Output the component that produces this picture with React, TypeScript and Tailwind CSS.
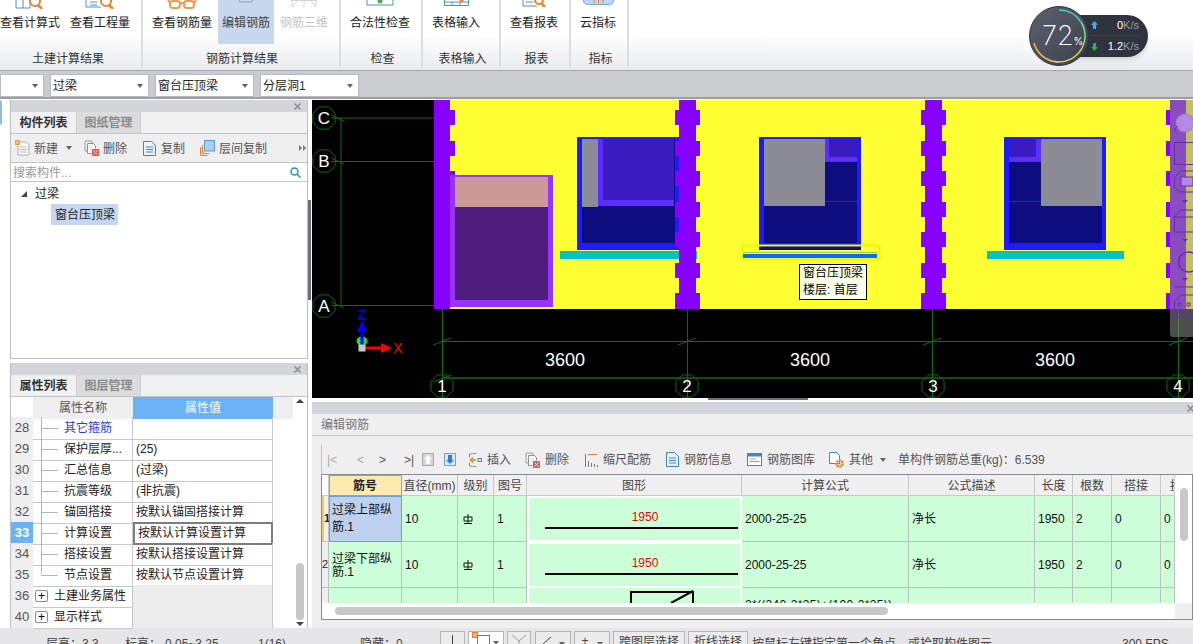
import React from "react";

const FONT = "font-['Liberation_Sans','Noto_Sans_CJK_SC',sans-serif]";

// --- small drawn icons ---

const NewIcon = () => (
  <svg width="15" height="16" viewBox="0 0 15 16" fill="none">
    <path d="M3 2h8l3 3v10H3z" fill="#fff" stroke="#a8a8a8" />
    <path d="M5 7h7M5 9.5h7M5 12h7" stroke="#b5b5b5" />
    <rect x="0" y="0" width="5" height="5" fill="#f59a3c" />
    <rect x="1.5" y="1.5" width="2" height="2" fill="#ffe3a8" />
  </svg>
);
const DeleteIcon = () => (
  <svg width="15" height="16" viewBox="0 0 15 16" fill="none">
    <path d="M1 1h7v2M1 1v10h2" stroke="#a0a0a0" />
    <path d="M3.5 3.5h6l2 2v3M3.5 3.5v10h4" stroke="#8f8f8f" fill="#fff" />
    <rect x="8" y="9" width="7" height="7" fill="#e05a5a" />
    <path d="M9.5 10.5l4 4M13.5 10.5l-4 4" stroke="#fff" />
  </svg>
);
const CopyIcon = () => (
  <svg width="13" height="15" viewBox="0 0 13 15" fill="none">
    <path d="M.5.5h8l4 4v10H.5z" fill="#eaf2fb" stroke="#3f86cf" />
    <path d="M3 6h7M3 8.5h7M3 11h7" stroke="#3f86cf" />
  </svg>
);
const LayerCopyIcon = () => (
  <svg width="15" height="16" viewBox="0 0 15 16" fill="none">
    <path d="M.5 7v8.5h7" stroke="#e9822c" />
    <path d="M2.5 5v8.5h7" stroke="#e9822c" />
    <rect x="4.5" y=".5" width="10" height="10.5" fill="#a9cdf3" stroke="#5b9bdc" />
  </svg>
);
const SmallClose = () => (
  <svg width="7" height="7" viewBox="0 0 7 7" stroke="#8a8a90" strokeWidth="1.5">
    <path d="M.5.5l6 6M6.5.5l-6 6" />
  </svg>
);
const Caret = ({ className = "" }: { className?: string }) => (
  <svg width="6" height="4" viewBox="0 0 6 4" className={className}>
    <path d="M0 0h6L3 4z" fill="#666" />
  </svg>
);
const SteelMark = () => (
  <svg width="10" height="10" viewBox="0 0 10 10" fill="none" stroke="#111">
    <path d="M1 3h8v4H1zM5 0v9M1 9.5h8" />
  </svg>
);

// tops of the ribbon icons are cut off by the window edge
const CalcIcon = () => (
  <svg width="30" height="9" viewBox="0 0 30 9" fill="none">
    <path d="M1 0v8h14V0M8 0v8" stroke="#4a8fd6" />
    <circle cx="20" cy="1" r="5" stroke="#f0822a" strokeWidth="2" />
    <path d="M23 5l4 4" stroke="#f0822a" strokeWidth="2.5" />
  </svg>
);
const QtyIcon = () => (
  <svg width="30" height="9" viewBox="0 0 30 9" fill="none">
    <path d="M1 0v7h15M5 2h7M5 5h7" stroke="#4a8fd6" />
    <circle cx="21" cy="1" r="5" stroke="#f0822a" strokeWidth="2" />
    <path d="M24 5l4 4" stroke="#f0822a" strokeWidth="2.5" />
  </svg>
);
const GlassesIcon = () => (
  <svg width="30" height="9" viewBox="0 0 30 9" fill="none" stroke="#f09a50" strokeWidth="2">
    <rect x="3" y="1" width="10" height="7" rx="3" />
    <rect x="17" y="1" width="10" height="7" rx="3" />
    <path d="M13 3h4M3 3L1 0M27 3l2-3" />
  </svg>
);
const PanelIcon = () => (
  <svg width="14" height="3" viewBox="0 0 14 3" fill="none">
    <path d="M0 0q0 2 2 2h10q2 0 2-2" stroke="#9a9ea6" />
  </svg>
);
const Rebar3dIcon = () => (
  <svg width="28" height="8" viewBox="0 0 28 8" fill="none" stroke="#d4d4d4">
    <path d="M1 .5h26M2 0v7M14 0v7M26 0v7M2 7L8 0M20 0l6 7" />
  </svg>
);
const CheckIcon = () => (
  <svg width="28" height="6" viewBox="0 0 28 6" fill="none">
    <path d="M1 0v5h26V0" stroke="#4a8fd6" />
    <circle cx="14" cy="1" r="2.5" fill="#58a55c" />
  </svg>
);
const TableInIcon = () => (
  <svg width="25" height="6" viewBox="0 0 25 6" fill="none">
    <path d="M.5 0v5.5h24V0M.5 2h24M8 2v3M16 2v3" stroke="#4a8fd6" />
    <path d="M15 0h5l-2 3z" fill="#f0822a" />
  </svg>
);
const ReportIcon = () => (
  <svg width="25" height="7" viewBox="0 0 25 7" fill="none">
    <path d="M1 0v6h14M4 2h7" stroke="#4a8fd6" />
    <circle cx="17" cy="0" r="4" stroke="#f0822a" strokeWidth="2" />
    <path d="M19 3l4 4" stroke="#f0822a" strokeWidth="2.5" />
  </svg>
);
const CloudIcon = () => (
  <svg width="31" height="5" viewBox="0 0 31 5" fill="none">
    <path d="M.5 0q0 4.5 5 4.5h20q5 0 5-4.5" fill="#bcd6f5" stroke="#6ea6e6" />
    <path d="M11 0v3M15.5 0v3M20 0v3" stroke="#f0822a" />
  </svg>
);

// --- ribbon ---

const ribbonGroups = [
  {
    label: "土建计算结果",
    width: "w-[143px]",
    row: "gap-[10px]",
    labelCls: "pr-[5px]",
    items: [
      { text: "查看计算式", icon: <CalcIcon /> },
      { text: "查看工程量", icon: <QtyIcon /> },
    ],
  },
  {
    label: "钢筋计算结果",
    width: "w-[198px]",
    row: "pl-[9px] gap-[6px]",
    labelCls: "pl-[2px]",
    items: [
      { text: "查看钢筋量", icon: <GlassesIcon /> },
      { text: "编辑钢筋", icon: <PanelIcon />, active: true },
      { text: "钢筋三维", icon: <Rebar3dIcon />, disabled: true },
    ],
  },
  { label: "检查", width: "w-[82px]", row: "pl-[9px]", labelCls: "pl-[3px]", items: [{ text: "合法性检查", icon: <CheckIcon /> }] },
  { label: "表格输入", width: "w-[78px]", row: "pl-[9px]", labelCls: "pl-[3px]", items: [{ text: "表格输入", icon: <TableInIcon /> }] },
  { label: "报表", width: "w-[70px]", row: "pl-[9px]", labelCls: "pl-[3px]", items: [{ text: "查看报表", icon: <ReportIcon /> }] },
  { label: "指标", width: "w-[58px]", row: "pl-[9px]", labelCls: "pl-[3px]", items: [{ text: "云指标", icon: <CloudIcon /> }] },
];

const Ribbon = () => (
  <div className="flex h-[71px] shrink-0 border-b border-[#a6a9ad] bg-gradient-to-b from-white via-white to-[#e9ebed]">
    {ribbonGroups.map((g) => (
      <div key={g.label} className={`flex h-[67px] shrink-0 flex-col border-r-2 border-[#dcdedf] ${g.width}`}>
        <div className={`flex h-[45px] ${g.row}`}>
          {g.items.map((it: any) => (
            <div
              key={it.text}
              className={`flex flex-col items-center ${it.active ? "w-[56px] bg-[#c8d8ef] text-[#444]" : ""} ${
                it.disabled ? "text-[#c4c4c4]" : "text-[#222]"
              }`}
            >
              <div className="flex h-[15px] items-start justify-center">{it.icon}</div>
              <span className="whitespace-nowrap text-[12px] leading-[17px]">{it.text}</span>
            </div>
          ))}
        </div>
        <div className={`pt-[7px] text-center text-[12px] leading-[16px] text-[#333] ${g.labelCls}`}>{g.label}</div>
      </div>
    ))}
  </div>
);

const Select = ({ value, className }: { value: string; className: string }) => (
  <div className={`flex h-[23px] items-center justify-between border border-[#b9bbbf] bg-white pl-[2px] pr-[5px] text-[12px] text-[#222] ${className}`}>
    <span>{value}</span>
    <Caret />
  </div>
);

const SelectorBar = () => (
  <div className="flex h-[28px] shrink-0 items-start gap-[6px] border-b-2 border-[#9c9ea2] bg-[#c9cbcf] pt-[3px]">
    <Select value="" className="w-[44px]" />
    <Select value="过梁" className="w-[99px]" />
    <Select value="窗台压顶梁" className="w-[99px]" />
    <Select value="分层洞1" className="w-[99px]" />
  </div>
);

// --- floating network meter ---

const SpeedArrow = ({ up }: { up?: boolean }) => (
  <svg width="7" height="8" viewBox="0 0 7 8">
    <path d={up ? "M3.5 0L7 4H5v4H2V4H0z" : "M3.5 8L7 4H5V0H2v4H0z"} fill={up ? "#3fa9f5" : "#2cb34a"} />
  </svg>
);

const NetMeter = () => (
  <div className="absolute left-[1029px] top-[6px] h-[60px] w-[120px]">
    <div className="absolute left-[40px] top-[9px] flex h-[42px] w-[79px] flex-col rounded-r-[21px] bg-[#2f333e] pl-[22px] pr-[9px] text-[11px] shadow-md">
      <div className="flex h-[21px] items-center justify-between border-b border-[#3c404b]">
        <SpeedArrow up />
        <span className="text-white">
          0<span className="text-[#9a9ea8]">K/s</span>
        </span>
      </div>
      <div className="flex h-[21px] items-center justify-between">
        <SpeedArrow />
        <span className="text-white">
          1.2<span className="text-[#9a9ea8]">K/s</span>
        </span>
      </div>
    </div>
    <svg width="60" height="60" viewBox="0 0 60 60" className="absolute left-0 top-0" fill="none">
      <defs>
        <linearGradient id="dial" x1="0" y1="0" x2="1" y2="1">
          <stop offset="0" stopColor="#5d6170" />
          <stop offset="1" stopColor="#3c3f4a" />
        </linearGradient>
      </defs>
      <circle cx="30" cy="30" r="29.5" fill="url(#dial)" stroke="#33363f" />
      <path d="M30 4A26 26 0 0 1 52 16" stroke="#3fd6c0" strokeWidth="1.5" />
      <path d="M52 16A26 26 0 0 1 53 42" stroke="#7edc9a" strokeWidth="1.5" />
      <path d="M53 42A26 26 0 0 1 25 55.5" stroke="#d6e060" strokeWidth="1.5" />
      <path d="M25 55.5A26 26 0 0 1 5 37" stroke="#f0b84a" strokeWidth="1.5" />
    </svg>
    <div className="absolute left-[13px] top-[14px] flex items-baseline font-['Inter',sans-serif] text-white">
      <span className="text-[27px] font-extralight leading-[32px]">72</span>
      <span className="text-[10px]">%</span>
    </div>
  </div>
);

// --- CAD canvas ---

const toothYs = [110, 141, 171, 202, 232, 263, 293];

const Column = ({ x }: { x: number }) => (
  <g fill="#8800ff">
    <rect x={x - 8} y={100} width={17} height={209} />
    {toothYs.map((y) => (
      <rect key={y} x={x - 12} y={y} width={25} height={y === 293 ? 16 : 15} />
    ))}
  </g>
);

const Octagon = ({ cx, cy, r, label }: { cx: number; cy: number; r: number; label: string }) => {
  const pts = Array.from({ length: 8 }, (_, i) => {
    const a = (Math.PI / 4) * i + Math.PI / 8;
    return `${cx + r * Math.cos(a)},${cy + r * Math.sin(a)}`;
  }).join(" ");
  return (
    <g>
      <polygon points={pts} fill="none" stroke="#0a6e0a" />
      <text x={cx} y={cy + 6} textAnchor="middle" fontSize="17" fill="#fff" fontFamily="Liberation Sans">
        {label}
      </text>
    </g>
  );
};

const Win = ({ x, children }: { x: number; children?: React.ReactNode }) => (
  <g>
    <rect x={x} y={137} width={102} height={113} fill="#1c1cff" />
    <rect x={x + 5} y={139} width={93} height={104} fill="#0d0d80" />
    {children}
  </g>
);

const Canvas = () => (
  <div className="relative h-[298px] shrink-0 bg-black">
    <svg width="881" height="298" viewBox="312 100 881 298" className="block">
      <rect x="446" y="100" width="747" height="209" fill="#ffff33" />

      {/* door opening */}
      <rect x="450" y="175" width="103" height="132" fill="#9933ff" />
      <rect x="455" y="177" width="93" height="30" fill="#cc9999" />
      <rect x="455" y="207" width="93" height="93" fill="#4f1d7c" />

      {/* windows */}
      <Win x={577}>
        <rect x="597" y="139" width="77" height="67" fill="#5b2eff" />
        <rect x="603" y="139" width="71" height="61" fill="#3a1bbf" />
        <rect x="582" y="139" width="16" height="68" fill="#8c8c96" />
      </Win>
      <rect x="560" y="251" width="137" height="8" fill="#00c4c4" />
      <Win x={759}>
        <rect x="825" y="139" width="32" height="23" fill="#5b2eff" />
        <rect x="829" y="139" width="28" height="18" fill="#3a1bbf" />
        <path d="M825 201.5h32" stroke="#4a1a90" />
        <rect x="764" y="139" width="61" height="67" fill="#8c8c96" />
      </Win>
      <rect x="742.5" y="245.5" width="137" height="14" fill="#ffff33" stroke="#e0ff00" strokeWidth="2" />
      <rect x="759" y="246.5" width="102" height="3.5" fill="#0d0d80" />
      <path d="M743 252.5h134" stroke="#a8d040" />
      <rect x="743" y="254" width="134" height="4" fill="#0a6cff" />
      <Win x={1004}>
        <rect x="1009" y="139" width="32" height="23" fill="#5b2eff" />
        <rect x="1009" y="139" width="27" height="18" fill="#3a1bbf" />
        <path d="M1009 201.5h32" stroke="#4a1a90" />
        <rect x="1041" y="139" width="61" height="67" fill="#8c8c96" />
      </Win>
      <rect x="987" y="251" width="137" height="8" fill="#00c4c4" />

      {/* columns */}
      <rect x="434" y="100" width="16" height="209" fill="#8800ff" />
      {toothYs.slice(0, 3).map((y) => (
        <rect key={y} x="450" y={y} width="5" height={y === 171 ? 4 : 15} fill="#8800ff" />
      ))}
      <Column x={687} />
      <Column x={933} />
      <g fill="#8800ff">
        <rect x="1170" y="100" width="16" height="209" />
        {toothYs.map((y) => (
          <rect key={y} x="1166" y={y} width="4" height={y === 293 ? 16 : 15} />
        ))}
      </g>

      {/* axis grid */}
      <g stroke="#0a6e0a" fill="none">
        <path d="M341 118v188M331 118h103M331 161.5h103M331 305.5h103" />
        <path d="M331 115l13 6M331 158l13 6M331 302l13 6" />
        <path d="M442.5 309v89M687.5 309v89M932.5 309v89M1178.5 309v89" />
        <path d="M442 341.5h751" />
        <path d="M442 378h751" strokeWidth="1.5" />
        <path d="M433 345l18-7M678 345l18-7M923 345l18-7M1169 345l18-7M433 382l18-7" />
      </g>
      <Octagon cx={324} cy={118} r={12} label="C" />
      <Octagon cx={324} cy={161} r={12} label="B" />
      <Octagon cx={324} cy={306} r={12} label="A" />
      <Octagon cx={442} cy={386} r={12} label="1" />
      <Octagon cx={687} cy={386} r={12} label="2" />
      <Octagon cx={933} cy={386} r={12} label="3" />
      <Octagon cx={1178} cy={386} r={12} label="4" />
      {[565, 810, 1055].map((x) => (
        <text key={x} x={x} y={366} textAnchor="middle" fontSize="18" fill="#fff" fontFamily="Liberation Sans">
          3600
        </text>
      ))}

      {/* axis gizmo */}
      <ellipse cx="362" cy="341" rx="5.5" ry="4.5" fill="#22dd22" />
      <path d="M362 345v-20" stroke="#0000ff" strokeWidth="3" />
      <path d="M362 320l-5 12h10z" fill="#0000ff" />
      <path d="M365 348h20" stroke="#ff0000" strokeWidth="3" />
      <path d="M392 348l-11-5v10z" fill="#ff0000" />
      <rect x="358.5" y="344.5" width="7" height="7" fill="#c8c8c8" />
      <text x="362" y="319" textAnchor="middle" fontSize="13" fill="#0000ff" fontFamily="Liberation Sans">Z</text>
      <text x="398" y="353" textAnchor="middle" fontSize="14" fill="#ff0000" fontFamily="Liberation Sans">X</text>

      {/* floating view toolbar */}
      <path d="M1170 100h23v237h-20q-3 0-3-3z" fill="#8c8c8c" fillOpacity="0.55" />
      <g fill="none" stroke="#6a2da8">
        <circle cx="1185" cy="123" r="9" fill="#b48ae6" stroke="#a07cc8" />
        <path d="M1176 131q-3-2 2-5" />
        <path d="M1174.5 142.5h19v22h-19z" />
        <path d="M1174.5 178l6-7h13M1174.5 178v10l5 4h14" />
        <rect x="1181" y="177" width="12" height="9" fill="#b48ae6" />
        <path d="M1174.5 217l6-7h13M1174.5 217h19M1174.5 217v15h19" />
        <path d="M1193 253a10 10 0 1 0 0 18" strokeWidth="1.5" />
        <path d="M1175 287h18M1174.5 302l6-7h13M1174.5 302v15h19" />
        <path d="M1178 303h3v3h-3zM1178 310h3v3h-3zM1187 303h3v3h-3zM1187 310h3v3h-3z" />
      </g>
      <g fill="#6a2da8">
        <path d="M1182 200h6l-3 3zM1182 239h6l-3 3zM1182 278h6l-3 3z" />
      </g>
    </svg>
    {/* hover tooltip */}
    <div className="absolute left-[487px] top-[164px] w-[68px] border border-black bg-[#ffffe8] pl-[3px] text-[12px] leading-[17px] text-black">
      <div>窗台压顶梁</div>
      <div>楼层: 首层</div>
    </div>
  </div>
);

// --- left panels ---

const PanelHead = ({ flush }: { flush?: boolean }) => (
  <div className={`flex h-[12px] shrink-0 items-center justify-end bg-[#d4d5da] ${flush ? "-mr-[1px]" : "pr-[6px]"}`}>
    <SmallClose />
  </div>
);

const Tabs = ({ active, other }: { active: string; other: string }) => (
  <div className="flex h-[22px] shrink-0 border-b border-[#c4c4c8] bg-[#f1f1f1] text-[12px] leading-[23px]">
    <div className="w-[65px] text-center font-bold text-[#333]">{active}</div>
    <div className="w-[65px] border-x border-[#cfcfcf] bg-[#dcdcdc] text-center font-bold text-[#8b8b8b]">{other}</div>
  </div>
);

const ComponentPanel = () => (
  <div className="flex h-[259px] shrink-0 flex-col border-x border-b border-[#bfc0c4] bg-white">
    <PanelHead />
    <Tabs active="构件列表" other="图纸管理" />
    <div className="flex h-[29px] shrink-0 items-center border-b border-[#c4c4c8] bg-[#efefef] pl-[4px] pr-[1px] text-[12px] leading-[18px] text-[#555]">
      <NewIcon />
      <span className="ml-[4px] pt-[1px]">新建</span>
      <Caret className="ml-[8px]" />
      <span className="ml-[12px]"><DeleteIcon /></span>
      <span className="ml-[4px] pt-[1px]">删除</span>
      <span className="ml-[16px]"><CopyIcon /></span>
      <span className="ml-[5px] pt-[1px]">复制</span>
      <span className="ml-[15px]"><LayerCopyIcon /></span>
      <span className="ml-[4px] pt-[1px]">层间复制</span>
      <svg width="7" height="6" viewBox="0 0 7 6" className="ml-auto">
        <path d="M0 0l3 3-3 3zM4 0l3 3-3 3z" fill="#777" />
      </svg>
    </div>
    <div className="flex h-[19px] shrink-0 items-center justify-between border-b border-[#c4c4c8] pl-[2px] pr-[6px] text-[12px] leading-[20px] text-[#9a9a9a]">
      <span className="pt-[1px]">搜索构件...</span>
      <svg width="11" height="11" viewBox="0 0 11 11" fill="none" stroke="#2f8fc8" strokeWidth="1.5">
        <circle cx="4.5" cy="4.5" r="3.5" />
        <path d="M7 7l3.5 3.5" />
      </svg>
    </div>
    <div className="pl-[10px] pt-[1px] text-[12px] text-[#222]">
      <div className="flex h-[21px] items-center">
        <svg width="6" height="6" viewBox="0 0 6 6"><path d="M6 0v6H0z" fill="#444" /></svg>
        <span className="ml-[8px]">过梁</span>
      </div>
      <div className="ml-[30px] h-[21px] w-[67px] bg-[#c5d7f0] pl-[4px] leading-[23px]">窗台压顶梁</div>
    </div>
  </div>
);

const propRows = [
  { no: 28, name: "其它箍筋", value: "", blue: true },
  { no: 29, name: "保护层厚...", value: "(25)" },
  { no: 30, name: "汇总信息", value: "(过梁)" },
  { no: 31, name: "抗震等级", value: "(非抗震)" },
  { no: 32, name: "锚固搭接", value: "按默认锚固搭接计算" },
  { no: 33, name: "计算设置", value: "按默认计算设置计算", selected: true },
  { no: 34, name: "搭接设置", value: "按默认搭接设置计算" },
  { no: 35, name: "节点设置", value: "按默认节点设置计算", last: true },
  { no: 36, name: "土建业务属性", group: true },
  { no: 40, name: "显示样式", group: true },
];

const PropRow = ({ row }: { row: (typeof propRows)[number] }) => (
  <div className="grid h-[21px] grid-cols-[22px_100px_140px] text-[12px] leading-[22px]">
    <div
      className={`border-b border-[#c9c9cd] text-center text-[13px] ${
        row.selected ? "bg-[#6cb2f7] font-bold text-white" : "bg-[#efefef] text-[#555]"
      }`}
    >
      {row.no}
    </div>
    <div className="relative flex items-center border-b border-r border-[#c9c9cd]">
      {row.group ? (
        <>
          <span className="ml-[2px] flex h-[12px] w-[13px] items-center justify-center rounded-[2px] border border-[#8a8a8a] text-[12px] leading-none">+</span>
          <span className="ml-[6px] whitespace-nowrap text-[#222]">{row.name}</span>
        </>
      ) : (
        <>
          <span className={`absolute left-[8px] top-0 w-px bg-[#b5b5b5] ${row.last ? "h-[10px]" : "h-[21px]"}`} />
          <span className="ml-[8px] h-px w-[17px] bg-[#b5b5b5]" />
          <span className={`ml-[6px] whitespace-nowrap ${row.blue ? "text-[#2a3fe0]" : "text-[#222]"}`}>{row.name}</span>
        </>
      )}
    </div>
    <div
      className={`whitespace-nowrap pl-[3px] text-[#222] ${
        row.group ? "border-b border-r border-[#c9c9cd] bg-[#ededed]" : ""
      } ${row.selected ? "border-2 border-[#7d7d7d] leading-[18px]" : "border-b border-r border-[#c9c9cd]"}`}
    >
      {row.value}
    </div>
  </div>
);

const PropertyPanel = () => (
  <div className="flex min-h-0 flex-1 flex-col border-x border-[#bfc0c4] bg-white">
    <PanelHead />
    <Tabs active="属性列表" other="图层管理" />
    <div className="flex min-h-0 flex-1">
      <div className="w-[282px]">
        <div className="grid h-[20px] grid-cols-[22px_100px_140px_20px] text-center text-[12px] leading-[22px]">
          <div />
          <div className="bg-[#efefef] text-[#555]">属性名称</div>
          <div className="bg-[#6cb2f7] text-white">属性值</div>
          <div className="bg-[#efefef]" />
        </div>
        {propRows.map((r) => (
          <PropRow key={r.no} row={r} />
        ))}
      </div>
      <div className="ml-[3px] flex w-[8px] flex-col items-center pt-[2px]">
        <svg width="8" height="4" viewBox="0 0 8 4"><path d="M4 0l4 4H0z" fill="#444" /></svg>
        <div className="mt-[160px] h-[57px] w-[8px] rounded-[4px] bg-[#c8c8c8]" />
        <svg width="8" height="4" viewBox="0 0 8 4" className="mt-[2px]"><path d="M0 0h8L4 4z" fill="#444" /></svg>
      </div>
    </div>
  </div>
);

// --- rebar table ---

const rebarCols = ["", "筋号", "直径(mm)", "级别", "图号", "图形", "计算公式", "公式描述", "长度", "根数", "搭接", "损"];

const GRID = "grid grid-cols-[7px_73px_56px_36px_33px_215px_167px_126px_38px_39px_49px_14px]";

const rebarRows = [
  { no: "1", name: "过梁上部纵筋.1", selected: true },
  { no: "2", name: "过梁下部纵筋.1" },
];

const Cell = ({ children, className = "bg-[#ccffd8]" }: { children?: React.ReactNode; className?: string }) => (
  <div className={`flex items-center overflow-hidden whitespace-nowrap border-b border-r border-[#c0c0c0] pl-[3px] text-[12px] text-[#111] ${className}`}>
    {children}
  </div>
);

const RebarRow = ({ row }: { row: (typeof rebarRows)[number] }) => (
  <div className={`${GRID} h-[46px]`}>
    <div
      className={`flex items-center border-b border-r border-[#c0c0c0] bg-[#efefef] text-[11px] text-[#222] ${
        row.selected ? "border-l-2 border-l-[#f5c65a] font-bold" : ""
      }`}
    >
      {row.no}
    </div>
    <Cell className={row.selected ? "bg-[#bdd0ee] leading-[17px] outline outline-[#6d9fdc] -outline-offset-1" : "bg-[#ccffd8] leading-[13px]"}>
      <span className={`whitespace-normal ${row.selected ? "pt-[1px]" : "pt-[2px]"}`}>{row.name}</span>
    </Cell>
    <Cell>10</Cell>
    <Cell className="bg-[#ccffd8] pl-[5px]"><SteelMark /></Cell>
    <Cell>1</Cell>
    <div className="flex flex-col items-center border-2 border-white bg-[#ccffd8] pt-[12px]">
      <span className="pl-[21px] text-[12px] leading-[14px] text-[#f00000]">1950</span>
      <span className="ml-[14px] mt-[3px] h-[2px] w-[193px] bg-black" />
    </div>
    <Cell>2000-25-25</Cell>
    <Cell>净长</Cell>
    <Cell>1950</Cell>
    <Cell>2</Cell>
    <Cell>0</Cell>
    <Cell>0</Cell>
  </div>
);

const StirrupRow = () => (
  <div className={`${GRID} h-[46px]`}>
    <div className="border-r border-[#c0c0c0] bg-[#efefef]" />
    <Cell />
    <Cell />
    <Cell />
    <Cell />
    <div className="relative border-x-2 border-white bg-[#ccffd8]">
      <svg width="211" height="16" viewBox="0 0 211 16" fill="none" stroke="#000" strokeWidth="2" className="block">
        <path d="M102 15V4h62v11M142 15l22-12" />
      </svg>
    </div>
    <Cell className="bg-[#ccffd8] items-start pt-[8px] tracking-[0.3px]">2*((240-2*25)+(100-2*25))</Cell>
    <Cell />
    <Cell />
    <Cell />
    <Cell />
    <Cell />
  </div>
);

const RebarTable = () => (
  <div className="flex h-[146px] w-[872px] border border-[#868b94] bg-white">
    <div className="w-[853px]">
      <div className={`${GRID} h-[21px] text-center text-[12px] leading-[22px] text-[#444]`}>
        {rebarCols.map((title, i) => (
          <div
            key={i}
            className={`overflow-hidden whitespace-nowrap border-b border-r border-[#c9c9c9] ${
              i === 1
                ? "bg-[#ffeab0] font-bold text-[#222] outline outline-[#7ea6d8] -outline-offset-1"
                : i === 0
                  ? "bg-white"
                  : i === 11
                    ? "bg-[#f0f0f0] pl-[9px] text-left"
                    : "bg-[#f0f0f0]"
            }`}
          >
            {title}
          </div>
        ))}
      </div>
      <div className="h-[107px] overflow-hidden">
        {rebarRows.map((r) => (
          <RebarRow key={r.no} row={r} />
        ))}
        <StirrupRow />
      </div>
      <div className="pl-[13px] pt-[4px]">
        <div className="h-[8px] w-[553px] rounded-[4px] bg-[#c8c8c8]" />
      </div>
    </div>
    <div className="flex w-[17px] flex-col items-center">
      <div className="mt-[13px] h-[53px] w-[8px] rounded-[4px] bg-[#c8c8c8]" />
      <div className="mt-auto h-[16px] w-full bg-[#efefef]" />
    </div>
  </div>
);

const Tool = ({ icon, text, className }: { icon: React.ReactNode; text: string; className: string }) => (
  <div className={`flex items-center gap-[5px] ${className}`}>
    {icon}
    <span>{text}</span>
  </div>
);

const RebarToolbar = () => (
  <div className="flex h-[29px] items-center border-l border-[#c4c4c4] pl-[5px] text-[12px] text-[#555]">
    <span className="w-[30px] text-[#aaa]">|&lt;</span>
    <span className="w-[22px] text-[#aaa]">&lt;</span>
    <span className="w-[25px] text-[#555]">&gt;</span>
    <span className="w-[18px] text-[#555]">&gt;|</span>
    <svg width="12" height="13" viewBox="0 0 12 13" className="mr-[10px]">
      <rect x=".5" y=".5" width="11" height="12" fill="#d8d8d8" stroke="#a8a8a8" />
      <path d="M6 2l4 4H8v5H4V6H2z" fill="#fff" />
    </svg>
    <svg width="12" height="13" viewBox="0 0 12 13">
      <rect x=".5" y=".5" width="11" height="12" fill="#dce8f5" stroke="#7f9fc4" />
      <path d="M6 11l4-4H8V2H4v5H2z" fill="#2f7fd6" />
    </svg>
    <Tool
      className="ml-[13px]"
      text="插入"
      icon={
        <svg width="13" height="14" viewBox="0 0 13 14" fill="none" stroke="#8a8a8a">
          <path d="M4 .5h3M4 13.5h3M.5 4.5V1h3M.5 9.5V13h3" />
          <path d="M7 7H2M4 4.5L1.5 7 4 9.5" stroke="#e9822c" strokeWidth="1.5" />
          <rect x="9" y="5.5" width="3.5" height="3" stroke="#3f86cf" />
        </svg>
      }
    />
    <Tool className="ml-[14px]" text="删除" icon={<DeleteIcon />} />
    <Tool
      className="ml-[16px]"
      text="缩尺配筋"
      icon={
        <svg width="13" height="14" viewBox="0 0 13 14" fill="none" stroke="#7a7a7a">
          <path d="M.5 1v13M3.5 8v6M6.5 10v4M9.5 11v3M12.5 12v2" />
          <path d="M3 1.5h9" stroke="#e9822c" />
          <path d="M.5 1v5" stroke="#3f86cf" />
        </svg>
      }
    />
    <Tool className="ml-[15px]" text="钢筋信息" icon={<CopyIcon />} />
    <Tool
      className="ml-[15px]"
      text="钢筋图库"
      icon={
        <svg width="15" height="13" viewBox="0 0 15 13" fill="none">
          <rect x=".5" y=".5" width="14" height="12" fill="#fff" stroke="#3f86cf" />
          <rect x="1" y="1" width="13" height="2.5" fill="#3f86cf" />
          <path d="M3 6h6" stroke="#d9a441" />
          <path d="M3 8.5h9" stroke="#7ab06a" />
        </svg>
      }
    />
    <Tool
      className="ml-[14px]"
      text="其他"
      icon={
        <svg width="15" height="16" viewBox="0 0 15 16" fill="none">
          <path d="M.5.5h7l3 3v8h-10z" fill="#fff" stroke="#3f86cf" />
          <circle cx="10.5" cy="11.5" r="3" stroke="#f0822a" strokeWidth="2.5" strokeDasharray="2 .6" />
        </svg>
      }
    />
    <Caret className="ml-[7px]" />
    <span className="ml-[12px]">单构件钢筋总重(kg)：6.539</span>
  </div>
);

const RebarPanel = () => (
  <div className="flex min-h-0 flex-1 flex-col bg-[#efefef]">
    <PanelHead flush />
    <div className="h-[22px] shrink-0 border-b border-[#c8c8c8] pl-[9px] text-[12px] leading-[23px] text-[#777]">编辑钢筋</div>
    <div className="flex-1 pl-[9px] pt-[9px]">
      <RebarToolbar />
      <RebarTable />
    </div>
  </div>
);

// --- status bar (cut by the window edge) ---

const StatusBtn = ({ className, children }: { className: string; children?: React.ReactNode }) => (
  <div className={`flex h-[22px] shrink-0 items-start justify-center border border-[#b5b5b8] bg-[#ececec] pt-[3px] text-[12px] leading-[14px] text-[#444] ${className}`}>
    {children}
  </div>
);

const StatusBar = () => (
  <div className="flex h-[16px] shrink-0 items-start overflow-hidden bg-[#e6e6e8] text-[12px] leading-[16px] text-[#444]">
    <span className="ml-[46px] mt-[8px] w-[79px]">层高：3.3</span>
    <span className="mt-[8px] w-[133px]">标高：-0.05~3.25</span>
    <span className="mt-[8px] w-[102px]">1(16)</span>
    <span className="mt-[8px] w-[80px]">隐藏：0</span>
    <div className="mt-[3px] flex gap-[3px]">
      <StatusBtn className="w-[25px]"><span className="h-[9px] w-px bg-[#444]" /></StatusBtn>
      <StatusBtn className="w-[36px] justify-start border-[#2b9af3] bg-white">
        <span className="ml-[3px] -mt-[3px] h-[6px] w-[6px] border border-[#e9822c] bg-[#f5b06a]" />
        <span className="-ml-[1px] h-[12px] w-[13px] border border-[#3f86cf]" />
        <Caret className="ml-[3px] mt-[6px]" />
      </StatusBtn>
      <StatusBtn className="w-[24px]">
        <svg width="17" height="10" viewBox="0 0 17 10" fill="none" stroke="#9a9a9a"><path d="M1 0l7 6 7-6M8 6v4" /></svg>
      </StatusBtn>
      <StatusBtn className="ml-[1px] w-[36px]">
        <svg width="12" height="10" viewBox="0 0 12 10" fill="none" stroke="#444"><path d="M1 9l8-7" /></svg>
        <Caret className="ml-[5px] mt-[7px]" />
      </StatusBtn>
      <StatusBtn className="w-[36px]">
        <span className="leading-[12px]">+</span>
        <Caret className="ml-[8px] mt-[7px]" />
      </StatusBtn>
      <StatusBtn className="w-[72px]">跨图层选择</StatusBtn>
      <StatusBtn className="w-[60px]">折线选择</StatusBtn>
    </div>
    <span className="ml-[4px] mt-[8px] w-[370px] whitespace-nowrap">按鼠标左键指定第一个角点，或拾取构件图元</span>
    <span className="mt-[8px] whitespace-nowrap">300 FPS</span>
  </div>
);

export default function App() {
  return (
    <div className={`relative flex h-[644px] w-[1193px] flex-col overflow-hidden bg-white ${FONT}`}>
      <Ribbon />
      <SelectorBar />
      <div className="flex min-h-0 flex-1">
        <div className="w-[10px] shrink-0 pt-[1px]">
          <div className="h-[25px] w-[2px] rounded-r-[2px] bg-[#8fbcec]" />
        </div>
        <div className="flex w-[298px] shrink-0 flex-col gap-[4px] pt-[1px]">
          <ComponentPanel />
          <PropertyPanel />
        </div>
        <div className="w-[4px] shrink-0 pt-[101px]">
          <div className="h-[100px] w-[3px] bg-[#6b6f78]" />
        </div>
        <div className="flex w-[881px] shrink-0 flex-col pt-[1px]">
          <Canvas />
          <div className="flex h-[4px] shrink-0 justify-center bg-white">
            <div className="ml-[11px] h-[2px] w-[100px] bg-[#6b6f78]" />
          </div>
          <RebarPanel />
        </div>
      </div>
      <StatusBar />
      <NetMeter />
    </div>
  );
}
